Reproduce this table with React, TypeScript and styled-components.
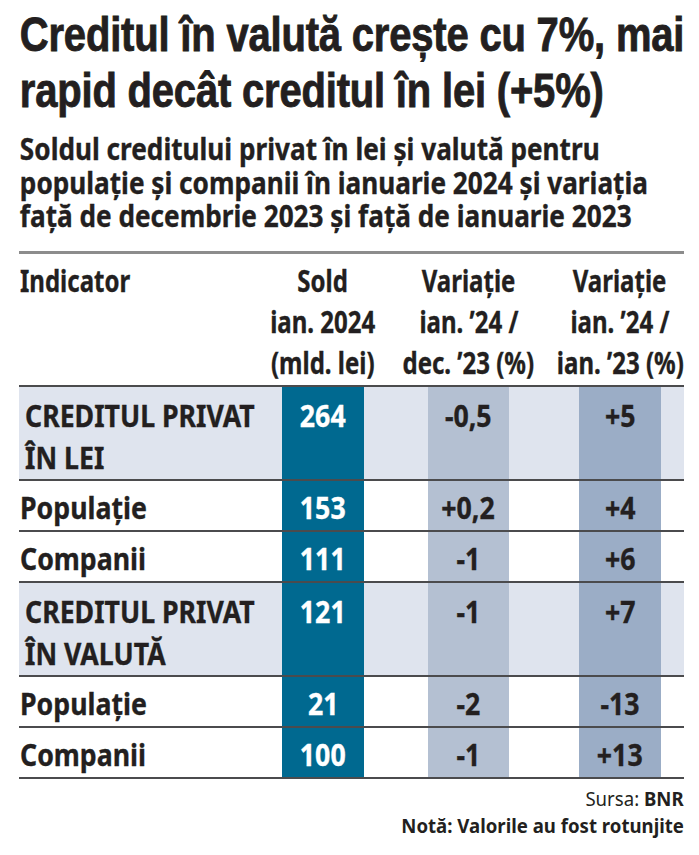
import React from "react";
import styled, { createGlobalStyle } from "styled-components";

const INK = "#231f20";
const COLS = "263px 82px 64px 81px 70px 82px 23px";
// no condensed faces are installed, so the condensed news faces are imitated by squeezing
const BODY_SQUEEZE = 0.89;
const HEAD_SQUEEZE = 0.8;

const GlobalStyle = createGlobalStyle`
  html, body {
    margin: 0;
    padding: 0;
    background: #ffffff;
  }
  body {
    color: ${INK};
    -webkit-font-smoothing: antialiased;
  }
`;

const Page = styled.div`
  width: 699px;
  height: 855px;
  box-sizing: border-box;
  padding: 6px 15px 0 19px;
  overflow: hidden;
`;

const Title = styled.h1`
  margin: 0;
  padding-left: 1px;
  width: max-content;
  white-space: nowrap;
  font-family: "Liberation Sans", Arial, sans-serif;
  font-weight: 700;
  font-size: 49px;
  line-height: 56px;
  letter-spacing: -0.2px;
  -webkit-text-stroke: 0.9px ${INK};
  transform: scaleX(0.815);
  transform-origin: 0 0;
`;

const Subtitle = styled.h2`
  margin: 14px 0 0;
  padding-left: 1px;
  width: max-content;
  white-space: nowrap;
  font-family: "Noto Sans", sans-serif;
  font-weight: 700;
  font-size: 30px;
  line-height: 33.5px;
  -webkit-text-stroke: 0.35px ${INK};
  transform: scaleX(0.872);
  transform-origin: 0 0;
`;

const Table = styled.div`
  margin-top: 18px;
  width: 665px;
  border-top: 3px solid #8c8c8c;
  font-family: "Noto Sans", sans-serif;
  font-weight: 700;
  font-size: 30px;
  -webkit-text-stroke: 0.35px;
`;

const Row = styled.div<{ $shaded?: boolean }>`
  display: grid;
  grid-template-columns: ${COLS};
  border-bottom: 2px solid #4b4b4d;
  background: ${(p) => (p.$shaded ? "#dfe4ee" : "transparent")};
  line-height: 42px;
`;

const HeadRow = styled(Row)`
  line-height: 41px;
`;

const HeadCell = styled.div<{ $left?: boolean }>`
  display: flex;
  flex-direction: column;
  align-items: ${(p) => (p.$left ? "flex-start" : "center")};
  padding: 6px 0 2px ${(p) => (p.$left ? "1px" : "0")};
  white-space: nowrap;
`;

const Narrow = styled.span<{ $origin?: string; $squeeze?: number }>`
  display: inline-block;
  white-space: nowrap;
  transform: scaleX(${(p) => p.$squeeze ?? BODY_SQUEEZE});
  transform-origin: ${(p) => p.$origin || "center"};
`;

const Label = styled.div<{ $total?: boolean }>`
  display: flex;
  flex-direction: column;
  align-items: flex-start;
  padding: ${(p) => (p.$total ? "8px 0 0 6px" : "6px 0 1px 1px")};
`;

const Value = styled.div<{ $tone: "dark" | "mid" | "deep"; $total?: boolean }>`
  padding: ${(p) => (p.$total ? "8px 0 0" : "6px 0 1px")};
  text-align: center;
  background: ${(p) =>
    p.$tone === "dark" ? "#006990" : p.$tone === "mid" ? "#b4c0d2" : "#9badc6"};
  color: ${(p) => (p.$tone === "dark" ? "#ffffff" : INK)};
`;

const Spacer = styled.div``;

const Footer = styled.div`
  margin-top: 6px;
  width: 665px;
  display: flex;
  flex-direction: column;
  align-items: flex-end;
  font-family: "Noto Sans", sans-serif;
  font-size: 20px;
  line-height: 27px;
`;

const Light = styled.span`
  font-weight: 400;
`;

const Bold = styled.span`
  font-weight: 700;
`;

type DataRow = {
  label: string[];
  sold: string;
  dec: string;
  ian: string;
  total?: boolean;
};

const rows: DataRow[] = [
  { label: ["CREDITUL PRIVAT", "ÎN LEI"], sold: "264", dec: "-0,5", ian: "+5", total: true },
  { label: ["Populație"], sold: "153", dec: "+0,2", ian: "+4" },
  { label: ["Companii"], sold: "111", dec: "-1", ian: "+6" },
  { label: ["CREDITUL PRIVAT", "ÎN VALUTĂ"], sold: "121", dec: "-1", ian: "+7", total: true },
  { label: ["Populație"], sold: "21", dec: "-2", ian: "-13" },
  { label: ["Companii"], sold: "100", dec: "-1", ian: "+13" },
];

function HeadLines({ lines }: { lines: string[] }) {
  return (
    <HeadCell>
      {lines.map((l) => (
        <Narrow key={l} $squeeze={HEAD_SQUEEZE}>
          {l}
        </Narrow>
      ))}
    </HeadCell>
  );
}

export default function App() {
  return (
    <Page>
      <GlobalStyle />
      <Title>
        Creditul în valută crește cu 7%, mai
        <br />
        rapid decât creditul în lei (+5%)
      </Title>
      <Subtitle>
        Soldul creditului privat în lei și valută pentru
        <br />
        populație și companii în ianuarie 2024 și variația
        <br />
        față de decembrie 2023 și față de ianuarie 2023
      </Subtitle>
      <Table>
        <HeadRow>
          <HeadCell $left>
            <Narrow $origin="left" $squeeze={HEAD_SQUEEZE}>
              Indicator
            </Narrow>
          </HeadCell>
          <HeadLines lines={["Sold", "ian. 2024", "(mld. lei)"]} />
          <Spacer />
          <HeadLines lines={["Variație", "ian. ’24 /", "dec. ’23 (%)"]} />
          <Spacer />
          <HeadLines lines={["Variație", "ian. ’24 / ", "ian. ’23 (%)"]} />
          <Spacer />
        </HeadRow>
        {rows.map((r, i) => (
          <Row key={i} $shaded={r.total}>
            <Label $total={r.total}>
              {r.label.map((l) => (
                <Narrow key={l} $origin="left">
                  {l}
                </Narrow>
              ))}
            </Label>
            <Value $tone="dark" $total={r.total}>
              <Narrow>{r.sold}</Narrow>
            </Value>
            <Spacer />
            <Value $tone="mid" $total={r.total}>
              <Narrow>{r.dec}</Narrow>
            </Value>
            <Spacer />
            <Value $tone="deep" $total={r.total}>
              <Narrow>{r.ian}</Narrow>
            </Value>
            <Spacer />
          </Row>
        ))}
      </Table>
      <Footer>
        <Narrow $origin="right" $squeeze={0.93}>
          <Light>Sursa: </Light>
          <Bold>BNR</Bold>
        </Narrow>
        <Narrow $origin="right" $squeeze={0.93}>
          <Bold>Notă: Valorile au fost rotunjite</Bold>
        </Narrow>
      </Footer>
    </Page>
  );
}
